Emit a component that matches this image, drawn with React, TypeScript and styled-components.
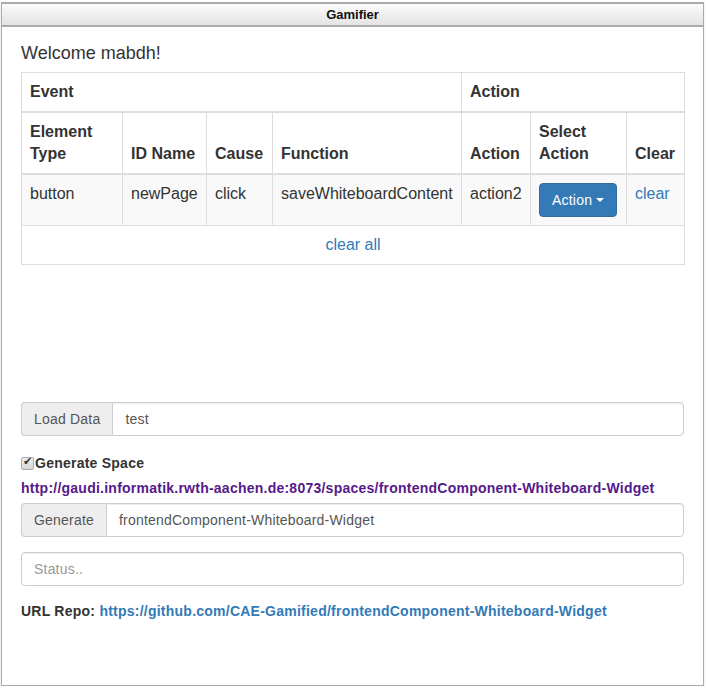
import React from "react";
import styled, { createGlobalStyle } from "styled-components";

const GlobalStyle = createGlobalStyle`
  html, body {
    margin: 0;
    padding: 0;
    background: #fff;
  }
  body {
    font-family: "Liberation Sans", Arial, Helvetica, sans-serif;
    color: #333;
  }
  * {
    box-sizing: border-box;
  }
`;

const Frame = styled.div`
  margin: 2px 0 0 1px;
  width: 703px;
  height: 684px;
  border: 1px solid #aaa;
  border-top: 2px solid #aaa;
  box-shadow: 0 1px 2px rgba(0, 0, 0, 0.15);
  display: flex;
  flex-direction: column;
  background: #fff;
`;

const TitleBar = styled.div`
  height: 23px;
  border-bottom: 2px solid #aaa;
  background: linear-gradient(to bottom, #fbfbfb 0%, #e4e4e4 100%);
  display: flex;
  align-items: center;
  justify-content: center;
  font-size: 13px;
  font-weight: bold;
  color: #111;
`;

const Body = styled.div`
  padding: 16px 19px 0 19px;
  display: flex;
  flex-direction: column;
`;

const Welcome = styled.div`
  font-size: 18px;
  line-height: 21px;
  color: #333;
  margin-bottom: 8px;
`;

const Table = styled.table`
  width: 663px;
  table-layout: fixed;
  border-collapse: collapse;
  font-size: 16px;
  line-height: 22px;
  color: #333;
  border: 1px solid #ddd;
`;

const Th = styled.th`
  text-align: left;
  font-weight: bold;
  vertical-align: bottom;
  padding: 8px;
  border: 1px solid #ddd;
  border-bottom: 2px solid #ddd;
`;

const Td = styled.td<{ $center?: boolean }>`
  padding: 8px;
  vertical-align: top;
  border: 1px solid #ddd;
  text-align: ${(p) => (p.$center ? "center" : "left")};
`;

const StripedRow = styled.tr`
  background: #f9f9f9;
`;

const Link = styled.a<{ $bold?: boolean; $visited?: boolean }>`
  color: ${(p) => (p.$visited ? "#551a8b" : "#337ab7")};
  font-weight: ${(p) => (p.$bold ? "bold" : "normal")};
  text-decoration: none;
  cursor: pointer;
`;

const DropButton = styled.button`
  display: inline-flex;
  align-items: center;
  height: 34px;
  padding: 6px 12px;
  font-family: inherit;
  font-size: 14px;
  line-height: 20px;
  letter-spacing: 0.2px;
  color: #fff;
  background: #337ab7;
  border: 1px solid #2e6da4;
  border-radius: 4px;
  cursor: pointer;
`;

const Caret = styled.span`
  display: inline-block;
  width: 0;
  height: 0;
  margin-left: 4px;
  border-top: 4px solid #fff;
  border-left: 4px solid transparent;
  border-right: 4px solid transparent;
`;

const InputGroup = styled.div<{ $top: number }>`
  display: flex;
  height: 34px;
  margin-top: ${(p) => p.$top}px;
  font-size: 14px;
`;

const Addon = styled.span`
  display: flex;
  align-items: center;
  padding: 6px 12px;
  background: #eee;
  color: #555;
  letter-spacing: 0.2px;
  border: 1px solid #ccc;
  border-right: 0;
  border-radius: 4px 0 0 4px;
  white-space: nowrap;
`;

const Input = styled.input<{ $alone?: boolean }>`
  flex: 1;
  height: 34px;
  padding: 6px 12px;
  font-family: inherit;
  font-size: 14px;
  letter-spacing: 0.2px;
  color: #555;
  border: 1px solid #ccc;
  border-radius: ${(p) => (p.$alone ? "4px" : "0 4px 4px 0")};
  box-shadow: inset 0 1px 1px rgba(0, 0, 0, 0.075);
  outline: none;
  &::placeholder {
    color: #999;
  }
`;

const CheckLine = styled.label`
  display: flex;
  align-items: center;
  margin-top: 17px;
  font-size: 14px;
  line-height: 20px;
  font-weight: bold;
  letter-spacing: 0.24px;
  color: #333;
`;

const Check = styled.input`
  appearance: none;
  width: 13px;
  height: 13px;
  margin: 0 1px 0 0;
  border: 1px solid #aaa;
  border-radius: 2px;
  background: linear-gradient(to bottom, #eee, #d8d8d8);
  position: relative;
  &:checked::after {
    content: "✔";
    position: absolute;
    left: 1px;
    top: -3px;
    font-size: 11px;
    color: #333;
  }
`;

const TextLine = styled.div<{ $top: number }>`
  margin-top: ${(p) => p.$top}px;
  font-size: 14px;
  line-height: 20px;
  font-weight: bold;
  letter-spacing: 0.24px;
  color: #333;
  white-space: nowrap;
`;

const Spacer = styled.div`
  height: 137px;
`;

const rows = [
  {
    type: "button",
    id: "newPage",
    cause: "click",
    fn: "saveWhiteboardContent",
    action: "action2",
  },
];

export default function App() {
  return (
    <>
      <GlobalStyle />
      <Frame>
        <TitleBar>Gamifier</TitleBar>
        <Body>
          <Welcome>Welcome mabdh!</Welcome>
          <Table>
            <colgroup>
              <col style={{ width: 101 }} />
              <col style={{ width: 84 }} />
              <col style={{ width: 66 }} />
              <col style={{ width: 189 }} />
              <col style={{ width: 69 }} />
              <col style={{ width: 96 }} />
              <col style={{ width: 58 }} />
            </colgroup>
            <thead>
              <tr>
                <Th colSpan={4}>Event</Th>
                <Th colSpan={3}>Action</Th>
              </tr>
              <tr>
                <Th>Element Type</Th>
                <Th>ID Name</Th>
                <Th>Cause</Th>
                <Th>Function</Th>
                <Th>Action</Th>
                <Th>Select Action</Th>
                <Th>Clear</Th>
              </tr>
            </thead>
            <tbody>
              {rows.map((r) => (
                <StripedRow key={r.id}>
                  <Td>{r.type}</Td>
                  <Td>{r.id}</Td>
                  <Td>{r.cause}</Td>
                  <Td>{r.fn}</Td>
                  <Td>{r.action}</Td>
                  <Td>
                    <DropButton>
                      Action <Caret />
                    </DropButton>
                  </Td>
                  <Td>
                    <Link>clear</Link>
                  </Td>
                </StripedRow>
              ))}
              <tr>
                <Td colSpan={7} $center>
                  <Link>clear all</Link>
                </Td>
              </tr>
            </tbody>
          </Table>
          <Spacer />
          <InputGroup $top={0}>
            <Addon>Load Data</Addon>
            <Input defaultValue="test" />
          </InputGroup>
          <CheckLine>
            <Check type="checkbox" defaultChecked />
            Generate Space
          </CheckLine>
          <TextLine $top={5}>
            <Link $bold $visited>
              http://gaudi.informatik.rwth-aachen.de:8073/spaces/frontendComponent-Whiteboard-Widget
            </Link>
          </TextLine>
          <InputGroup $top={5}>
            <Addon>Generate</Addon>
            <Input defaultValue="frontendComponent-Whiteboard-Widget" />
          </InputGroup>
          <InputGroup $top={15}>
            <Input $alone placeholder="Status.." />
          </InputGroup>
          <TextLine $top={15}>
            URL Repo:{" "}
            <Link $bold>https://github.com/CAE-Gamified/frontendComponent-Whiteboard-Widget</Link>
          </TextLine>
        </Body>
      </Frame>
    </>
  );
}
